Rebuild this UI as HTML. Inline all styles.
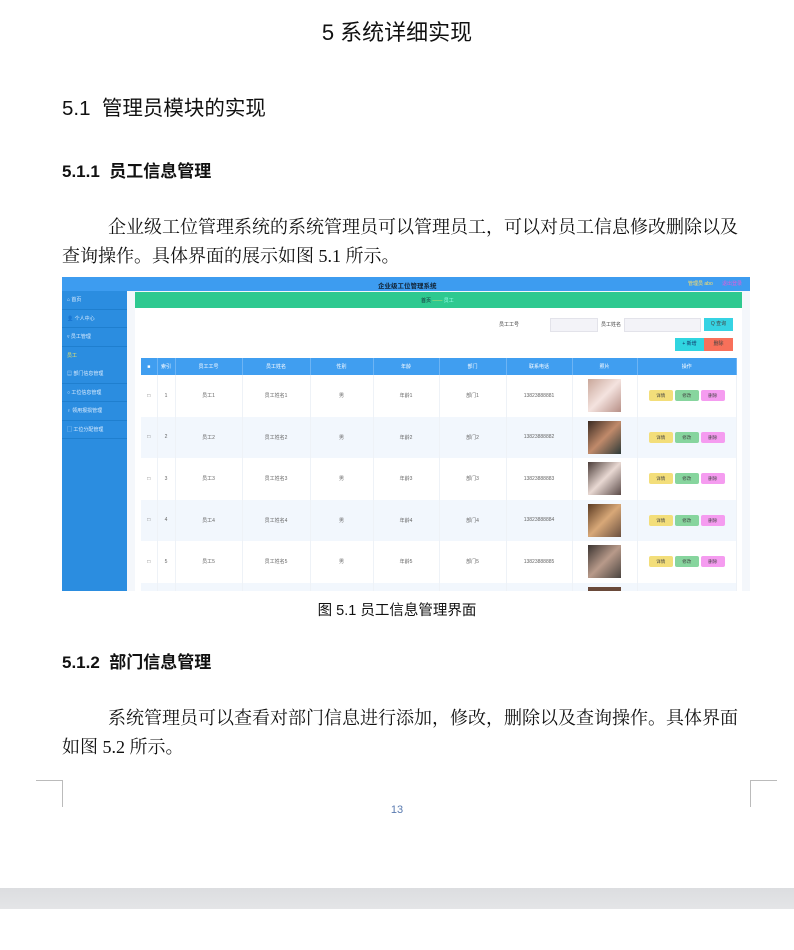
<!DOCTYPE html>
<html><head><meta charset="utf-8">
<style>
*{margin:0;padding:0;box-sizing:border-box}
body{width:794px;height:950px;background:#fff;position:relative;overflow:hidden;font-family:"Liberation Sans","Noto Sans CJK SC",sans-serif;color:#111}
.abs{position:absolute;white-space:nowrap}
.serif{font-family:"Liberation Serif","Noto Serif CJK SC",serif}
.p{font-size:18px;line-height:29px}
#shot{position:absolute;left:62px;top:277px;width:688px;height:314px;overflow:hidden;background:#f4f7fb;font-size:5px;color:#444}
#shot .hdr{position:absolute;left:0;top:0;width:688px;height:14px;background:#3d9cf0}
#shot .side{position:absolute;left:0;top:14px;width:65px;height:300px;background:#2b8de0}
.side div{height:18.5px;border-bottom:1px solid #1f7fcf;color:#dfeeff;padding-left:5px;line-height:18px;font-size:5px}
.green{position:absolute;left:73px;top:15px;width:607px;height:16px;background:#2ec990}
.main{position:absolute;left:73px;top:31px;width:607px;height:283px;background:#fff}
table{position:absolute;left:79px;top:81px;border-collapse:collapse;width:596px}
th{background:#409ef0;color:#fff;height:17px;font-weight:normal;border-right:1px solid #6db4f4;font-size:5px}
td{height:41.5px;text-align:center;border-right:1px solid #eef2f7;font-size:5px;color:#666}
tr.alt td{background:#f2f7fd}
.ph{display:inline-block;width:33px;height:33px;vertical-align:middle}
.b{display:inline-block;width:24px;height:11px;border-radius:2px;margin:0 1px;font-size:4.5px;line-height:11px;color:#444}
</style></head><body>
<div class="abs" style="left:0;width:794px;text-align:center;top:15px;font-size:22px">5 系统详细实现</div>
<div class="abs" style="left:62px;top:91px;font-size:20.5px">5.1&nbsp; 管理员模块的实现</div>
<div class="abs" style="left:62px;top:157px;font-size:17px;font-weight:bold">5.1.1&nbsp; 员工信息管理</div>
<div class="abs serif p" style="left:108px;top:213px">企业级工位管理系统的系统管理员可以管理员工，可以对员工信息修改删除以及</div>
<div class="abs serif p" style="left:62px;top:242px">查询操作。具体界面的展示如图 5.1 所示。</div>

<div id="shot">
 <div class="hdr"><span class="abs" style="left:316px;top:3px;font-size:6.5px;font-weight:bold;color:#123">企业级工位管理系统</span><span class="abs" style="left:626px;top:3px;color:#ffe066">管理员 abo</span><span class="abs" style="left:660px;top:3px;color:#e65ad8">退出登录</span></div>
 <div class="side"><div>⌂ 首页</div><div>👤 个人中心</div><div>▿ 员工管理</div><div style="color:#e7e36a;border:none">员工</div><div>▤ 部门信息管理</div><div>○ 工位信息管理</div><div>♀ 领用报损管理</div><div>▢ 工位分配管理</div></div>
 <div class="green"><span class="abs" style="left:286px;top:5px;color:#123">首页 <span style="color:#e7e36a">——</span> <span style="color:#9fe">员工</span></span></div>
 <div class="main"></div>
 <span class="abs" style="left:437px;top:44px">员工工号</span>
 <div class="abs" style="left:488px;top:41px;width:48px;height:14px;background:#f3f3f8;border:1px solid #e3e3ea"></div>
 <span class="abs" style="left:539px;top:44px">员工姓名</span>
 <div class="abs" style="left:562px;top:41px;width:77px;height:14px;background:#f3f3f8;border:1px solid #e3e3ea"></div>
 <div class="abs" style="left:642px;top:41px;width:29px;height:13px;background:#36d3e3;text-align:center;line-height:13px">Q 查询</div>
 <div class="abs" style="left:613px;top:61px;width:29px;height:13px;background:#30d5e0;text-align:center;line-height:13px;color:#136">+ 新增</div>
 <div class="abs" style="left:642px;top:61px;width:29px;height:13px;background:#f8705a;text-align:center;line-height:13px">删除</div>
 <table>
  <tr><th style="width:16px">■</th><th style="width:18px">索引</th><th style="width:67px">员工工号</th><th style="width:68px">员工姓名</th><th style="width:63px">性别</th><th style="width:66px">年龄</th><th style="width:67px">部门</th><th style="width:66px">联系电话</th><th style="width:65px">照片</th><th>操作</th></tr>
  <tr><td>□</td><td>1</td><td>员工1</td><td>员工姓名1</td><td>男</td><td>年龄1</td><td>部门1</td><td>13823888881</td><td><span class="ph" style="background:linear-gradient(135deg,#c9a79a,#f4e3df 50%,#b78f86)"></span></td><td><span class="b" style="background:#f3de7a">详情</span><span class="b" style="background:#87d59e">修改</span><span class="b" style="background:#f59cf0">删除</span></td></tr>
  <tr class="alt"><td>□</td><td>2</td><td>员工2</td><td>员工姓名2</td><td>男</td><td>年龄2</td><td>部门2</td><td>13823888882</td><td><span class="ph" style="background:linear-gradient(135deg,#3a2a22,#c08a6a 50%,#2d3a38)"></span></td><td><span class="b" style="background:#f3de7a">详情</span><span class="b" style="background:#87d59e">修改</span><span class="b" style="background:#f59cf0">删除</span></td></tr>
  <tr><td>□</td><td>3</td><td>员工3</td><td>员工姓名3</td><td>男</td><td>年龄3</td><td>部门3</td><td>13823888883</td><td><span class="ph" style="background:linear-gradient(135deg,#4a3c38,#e8d8d2 50%,#5a4a48)"></span></td><td><span class="b" style="background:#f3de7a">详情</span><span class="b" style="background:#87d59e">修改</span><span class="b" style="background:#f59cf0">删除</span></td></tr>
  <tr class="alt"><td>□</td><td>4</td><td>员工4</td><td>员工姓名4</td><td>男</td><td>年龄4</td><td>部门4</td><td>13823888884</td><td><span class="ph" style="background:linear-gradient(135deg,#5a3a22,#d8a878 50%,#6a5040)"></span></td><td><span class="b" style="background:#f3de7a">详情</span><span class="b" style="background:#87d59e">修改</span><span class="b" style="background:#f59cf0">删除</span></td></tr>
  <tr><td>□</td><td>5</td><td>员工5</td><td>员工姓名5</td><td>男</td><td>年龄5</td><td>部门5</td><td>13823888885</td><td><span class="ph" style="background:linear-gradient(135deg,#3a3330,#b89a8a 50%,#4a4440)"></span></td><td><span class="b" style="background:#f3de7a">详情</span><span class="b" style="background:#87d59e">修改</span><span class="b" style="background:#f59cf0">删除</span></td></tr>
  <tr class="alt"><td></td><td></td><td></td><td></td><td></td><td></td><td></td><td></td><td><span class="ph" style="background:#6a4a3a"></span></td><td></td></tr>
 </table>
</div>

<div class="abs" style="left:0;width:794px;text-align:center;top:599px;font-size:14.5px">图 5.1 员工信息管理界面</div>
<div class="abs" style="left:62px;top:648px;font-size:17px;font-weight:bold">5.1.2&nbsp; 部门信息管理</div>
<div class="abs serif p" style="left:108px;top:704px">系统管理员可以查看对部门信息进行添加，修改，删除以及查询操作。具体界面</div>
<div class="abs serif p" style="left:62px;top:733px">如图 5.2 所示。</div>

<div class="abs" style="left:36px;top:780px;width:27px;height:27px;border-top:1px solid #bbb;border-right:1px solid #bbb"></div>
<div class="abs" style="left:750px;top:780px;width:27px;height:27px;border-top:1px solid #bbb;border-left:1px solid #bbb"></div>
<div class="abs" style="left:0;width:794px;text-align:center;top:804px;font-size:11px;color:#5a7bb0">13</div>
<div class="abs" style="left:0;top:888px;width:794px;height:21px;background:linear-gradient(#dcdde0,#e4e5e7)"></div>
</body></html>
